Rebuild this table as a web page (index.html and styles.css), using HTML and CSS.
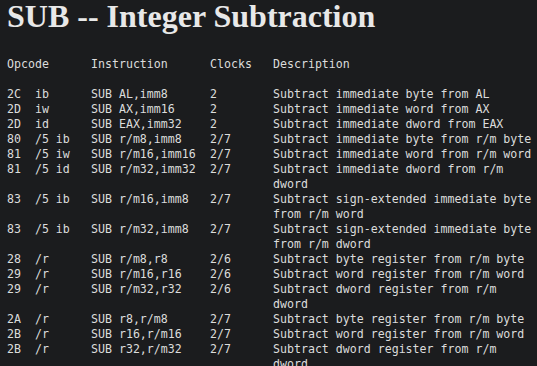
FILE: index.html
```html
<!DOCTYPE html>
<html>
<head>
<meta charset="utf-8">
<link rel="stylesheet" href="styles.css">
</head>
<body>
<h1 class="title">SUB -- Integer Subtraction</h1>
<div class="ops">
  <div class="row head"><span>Opcode</span><span>Instruction</span><span>Clocks</span><span>Description</span></div>
  <div class="row"><span>2C  ib</span><span>SUB AL,imm8</span><span>2</span><span>Subtract immediate byte from AL</span></div>
  <div class="row"><span>2D  iw</span><span>SUB AX,imm16</span><span>2</span><span>Subtract immediate word from AX</span></div>
  <div class="row"><span>2D  id</span><span>SUB EAX,imm32</span><span>2</span><span>Subtract immediate dword from EAX</span></div>
  <div class="row"><span>80  /5 ib</span><span>SUB r/m8,imm8</span><span>2/7</span><span>Subtract immediate byte from r/m byte</span></div>
  <div class="row"><span>81  /5 iw</span><span>SUB r/m16,imm16</span><span>2/7</span><span>Subtract immediate word from r/m word</span></div>
  <div class="row"><span>81  /5 id</span><span>SUB r/m32,imm32</span><span>2/7</span><span>Subtract immediate dword from r/m dword</span></div>
  <div class="row"><span>83  /5 ib</span><span>SUB r/m16,imm8</span><span>2/7</span><span>Subtract sign-extended immediate byte from r/m word</span></div>
  <div class="row"><span>83  /5 ib</span><span>SUB r/m32,imm8</span><span>2/7</span><span>Subtract sign-extended immediate byte from r/m dword</span></div>
  <div class="row"><span>28  /r</span><span>SUB r/m8,r8</span><span>2/6</span><span>Subtract byte register from r/m byte</span></div>
  <div class="row"><span>29  /r</span><span>SUB r/m16,r16</span><span>2/6</span><span>Subtract word register from r/m word</span></div>
  <div class="row"><span>29  /r</span><span>SUB r/m32,r32</span><span>2/6</span><span>Subtract dword register from r/m dword</span></div>
  <div class="row"><span>2A  /r</span><span>SUB r8,r/m8</span><span>2/7</span><span>Subtract byte register from r/m byte</span></div>
  <div class="row"><span>2B  /r</span><span>SUB r16,r/m16</span><span>2/7</span><span>Subtract word register from r/m word</span></div>
  <div class="row"><span>2B  /r</span><span>SUB r32,r/m32</span><span>2/7</span><span>Subtract dword register from r/m dword</span></div>
</div>
</body>
</html>
```
FILE: styles.css
```css
html, body {
  margin: 0;
  padding: 0;
  background: #1b1c1e;
}
body {
  padding-left: 7px;
  color: #dcdcdc;
  overflow: hidden;
}
.title {
  margin: 0;
  font-family: "Liberation Serif", serif;
  font-weight: bold;
  font-size: 32px;
  line-height: 32px;
  color: #e8e8e8;
}
.ops {
  margin-top: 25px;
  font-family: "DejaVu Sans Mono", monospace;
  font-size: 11.6px;
  line-height: 15px;
}
.row {
  display: grid;
  grid-template-columns: 84px 119px 63px 1fr;
}
.row span {
  white-space: pre-wrap;
}
.row.head {
  margin-bottom: 15px;
}
```
